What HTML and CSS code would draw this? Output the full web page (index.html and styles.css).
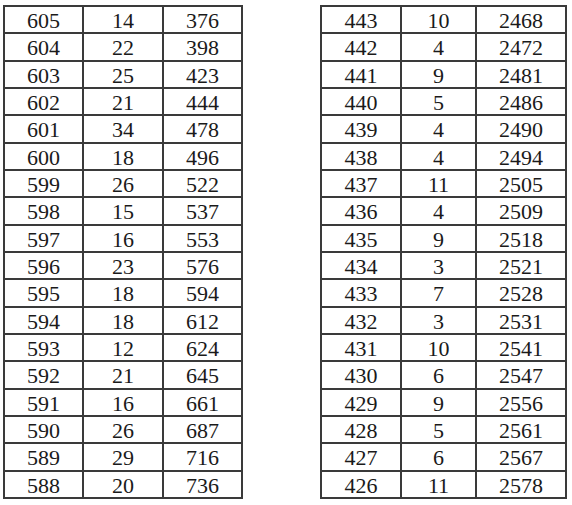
FILE: index.html
```html
<!DOCTYPE html>
<html>
<head>
<meta charset="utf-8">
<link rel="stylesheet" href="styles.css">
</head>
<body>
<div class="page">
  <table class="grid grid-left">
    <colgroup><col class="c1"><col class="c2"><col class="c3"></colgroup>
    <tbody>
      <tr><td>605</td><td>14</td><td>376</td></tr>
      <tr><td>604</td><td>22</td><td>398</td></tr>
      <tr><td>603</td><td>25</td><td>423</td></tr>
      <tr><td>602</td><td>21</td><td>444</td></tr>
      <tr><td>601</td><td>34</td><td>478</td></tr>
      <tr><td>600</td><td>18</td><td>496</td></tr>
      <tr><td>599</td><td>26</td><td>522</td></tr>
      <tr><td>598</td><td>15</td><td>537</td></tr>
      <tr><td>597</td><td>16</td><td>553</td></tr>
      <tr><td>596</td><td>23</td><td>576</td></tr>
      <tr><td>595</td><td>18</td><td>594</td></tr>
      <tr><td>594</td><td>18</td><td>612</td></tr>
      <tr><td>593</td><td>12</td><td>624</td></tr>
      <tr><td>592</td><td>21</td><td>645</td></tr>
      <tr><td>591</td><td>16</td><td>661</td></tr>
      <tr><td>590</td><td>26</td><td>687</td></tr>
      <tr><td>589</td><td>29</td><td>716</td></tr>
      <tr><td>588</td><td>20</td><td>736</td></tr>
    </tbody>
  </table>
  <table class="grid grid-right">
    <colgroup><col class="r1"><col class="r2"><col class="r3"></colgroup>
    <tbody>
      <tr><td>443</td><td>10</td><td>2468</td></tr>
      <tr><td>442</td><td>4</td><td>2472</td></tr>
      <tr><td>441</td><td>9</td><td>2481</td></tr>
      <tr><td>440</td><td>5</td><td>2486</td></tr>
      <tr><td>439</td><td>4</td><td>2490</td></tr>
      <tr><td>438</td><td>4</td><td>2494</td></tr>
      <tr><td>437</td><td>11</td><td>2505</td></tr>
      <tr><td>436</td><td>4</td><td>2509</td></tr>
      <tr><td>435</td><td>9</td><td>2518</td></tr>
      <tr><td>434</td><td>3</td><td>2521</td></tr>
      <tr><td>433</td><td>7</td><td>2528</td></tr>
      <tr><td>432</td><td>3</td><td>2531</td></tr>
      <tr><td>431</td><td>10</td><td>2541</td></tr>
      <tr><td>430</td><td>6</td><td>2547</td></tr>
      <tr><td>429</td><td>9</td><td>2556</td></tr>
      <tr><td>428</td><td>5</td><td>2561</td></tr>
      <tr><td>427</td><td>6</td><td>2567</td></tr>
      <tr><td>426</td><td>11</td><td>2578</td></tr>
    </tbody>
  </table>
</div>
</body>
</html>
```
FILE: styles.css
```css
html, body {
  margin: 0;
  padding: 0;
  background: #ffffff;
}

.page {
  display: flex;
  align-items: flex-start;
  gap: 77px;
  padding: 5px 0 0 3px;
}

.grid {
  border-collapse: collapse;
  table-layout: fixed;
  height: 494px;
  font-family: "Liberation Serif", "Times New Roman", serif;
  font-size: 22px;
  color: #1a1a1a;
}

.grid td {
  border: 2px solid #3a3a3a;
  padding: 3px 0 0 0;
  text-align: center;
  line-height: 1;
}

.grid-left {
  width: 238px;
}

.c1 { width: 79px; }
.c2 { width: 80px; }
.c3 { width: 79px; }

.grid-right {
  width: 245px;
}

.r1 { width: 80px; }
.r2 { width: 75px; }
.r3 { width: 90px; }
```
